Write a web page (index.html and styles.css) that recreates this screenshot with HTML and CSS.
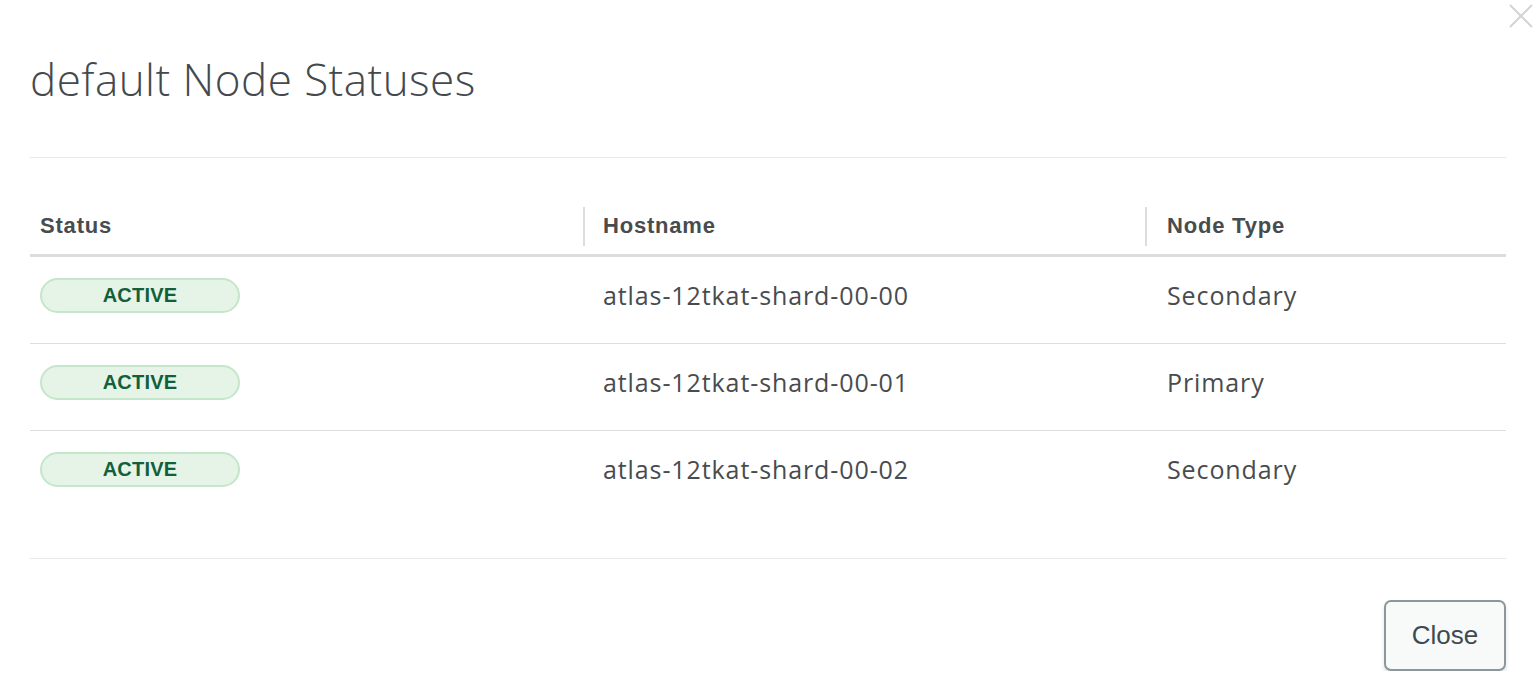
FILE: index.html
```html
<!DOCTYPE html>
<html lang="en">
<head>
<meta charset="utf-8">
<title>default Node Statuses</title>
<link rel="stylesheet" href="styles.css">
</head>
<body>
<div class="modal">
  <button class="modal-x" aria-label="Close">
    <svg width="24" height="24" viewBox="0 0 24 24"><path d="M1 1 L23 23 M23 1 L1 23" stroke="#d2d4d5" stroke-width="2" fill="none"/></svg>
  </button>
  <header class="modal-header">
    <h1 class="modal-title">default Node Statuses</h1>
  </header>
  <div class="modal-body">
    <div class="table">
      <div class="th th-first"><span class="th-inner">Status</span></div>
      <div class="th"><span class="th-inner th-sep">Hostname</span></div>
      <div class="th"><span class="th-inner th-sep th-sep-last">Node Type</span></div>

      <div class="td td-first"><span class="badge">ACTIVE</span></div>
      <div class="td">atlas-12tkat-shard-00-00</div>
      <div class="td td-type">Secondary</div>

      <div class="td td-first"><span class="badge">ACTIVE</span></div>
      <div class="td">atlas-12tkat-shard-00-01</div>
      <div class="td td-type">Primary</div>

      <div class="td td-first td-last"><span class="badge">ACTIVE</span></div>
      <div class="td td-last">atlas-12tkat-shard-00-02</div>
      <div class="td td-type td-last">Secondary</div>
    </div>
  </div>
  <footer class="modal-footer">
    <button class="btn">Close</button>
  </footer>
</div>
</body>
</html>
```

FILE: styles.css
```css
html, body {
  margin: 0;
  padding: 0;
  background: #ffffff;
}

body {
  font-family: "Open Sans", "Liberation Sans", sans-serif;
  color: #474c4f;
}

.modal {
  position: relative;
  padding: 0 32px 0 30px;
}

.modal-x {
  position: absolute;
  top: 4px;
  right: 5px;
  width: 24px;
  height: 24px;
  padding: 0;
  border: 0;
  background: none;
  display: flex;
}

.modal-header {
  height: 158px;
  border-bottom: 1px solid #e7e9ea;
  box-sizing: border-box;
  padding-top: 49px;
}

.modal-title {
  margin: 0;
  font-weight: 300;
  font-size: 44px;
  line-height: 60px;
  letter-spacing: 0.45px;
  color: #45494c;
}

.modal-body {
  padding-top: 40px;
  padding-bottom: 41px;
  border-bottom: 1px solid #e7e9ea;
}

.table {
  display: grid;
  grid-template-columns: 553px 562px 1fr;
}

.th {
  height: 56px;
  border-bottom: 3px solid #dadddd;
  display: flex;
  align-items: center;
  font-weight: 700;
  font-size: 22px;
  color: #474c4f;
  font-family: "Liberation Sans", "Open Sans", sans-serif;
  letter-spacing: 0.8px;
}

.th-inner {
  display: flex;
  align-items: center;
  height: 39px;
  padding-left: 10px;
  width: 100%;
}

.th-sep {
  border-left: 2px solid #dcdede;
  padding-left: 18px;
}

.th-sep-last {
  padding-left: 20px;
}

.td {
  display: flex;
  align-items: flex-start;
  padding: 21px 0 30px 20px;
  border-bottom: 1px solid #dcdedf;
  font-size: 25px;
  line-height: 35px;
  letter-spacing: 0.9px;
  color: #484c4f;
}

.td-type {
  padding-left: 22px;
}

.td-first {
  padding-left: 10px;
}

.td-last {
  border-bottom: 0;
}

.badge {
  box-sizing: border-box;
  width: 200px;
  height: 35px;
  border-radius: 18px;
  background: #e5f4e6;
  border: 2px solid #c4e6cb;
  color: #12603b;
  font-family: "Liberation Sans", "Open Sans", sans-serif;
  font-weight: 700;
  font-size: 20px;
  letter-spacing: 0.2px;
  display: flex;
  align-items: center;
  justify-content: center;
}

.modal-footer {
  display: flex;
  justify-content: flex-end;
  padding-top: 41px;
}

.btn {
  width: 122px;
  height: 71px;
  box-sizing: border-box;
  border: 2px solid #8b979b;
  border-radius: 7px;
  background: #f8fafa;
  box-shadow: 0 3px 4px rgba(0, 0, 0, 0.12);
  font-family: "Liberation Sans", "Open Sans", sans-serif;
  font-size: 26px;
  color: #3f4a50;
}
```
